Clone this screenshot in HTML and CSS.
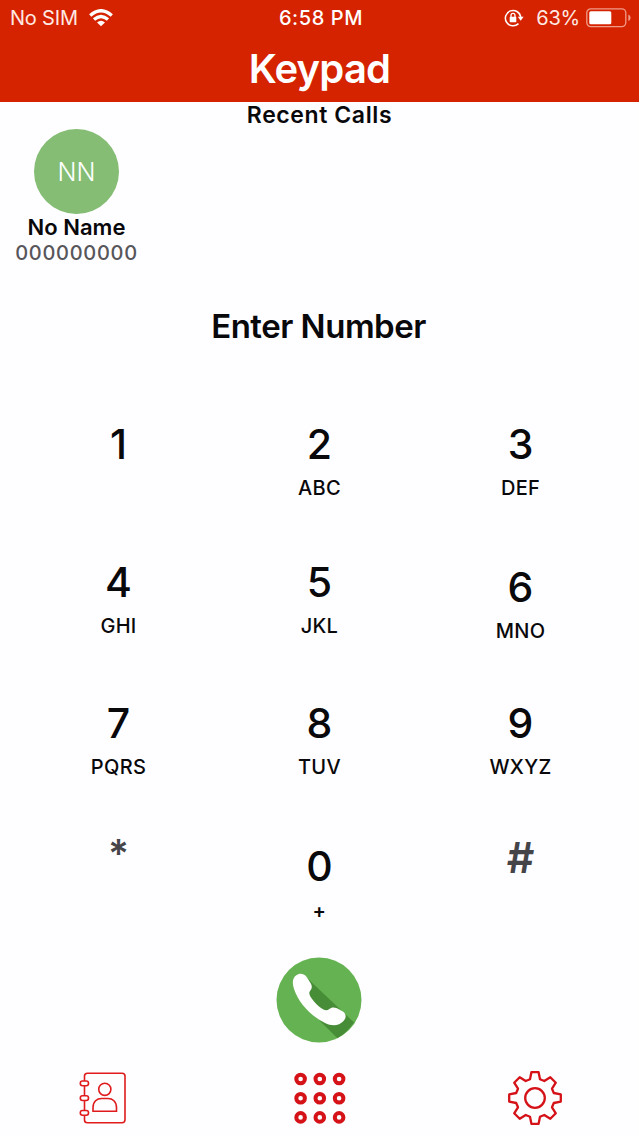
FILE: index.html
```
<!DOCTYPE html>
<html lang="en">
<head>
<meta charset="utf-8">
<title>Keypad</title>
<link rel="stylesheet" href="styles.css">
</head>
<body>
<div class="screen">
  <header class="header">
    <div class="status">
      <div class="status-left">
        <span class="carrier">No SIM</span>
        <svg class="wifi" width="24" height="18" viewBox="0 0 24 18" fill="none" stroke="#fff" stroke-width="3.3">
          <path d="M1.2 6.4Q12-3 22.8 6.4"/><path d="M5 10.6Q12 4.4 19 10.6"/><path d="M12 17.3L8 13.5Q12 10 16 13.5Z" fill="#fff" stroke="none"/>
        </svg>
      </div>
      <span class="time">6:58 PM</span>
      <div class="status-right">
        <svg class="lock" width="20" height="18" viewBox="0 0 20 18" fill="none" stroke="#fff" stroke-width="1.5">
          <path d="M14.5 14.6A7.7 7.7 0 1 1 16.7 8"/><path d="M13.8 7.7H19.6L16.7 11.8Z" fill="#fff" stroke="none"/><rect x="5.7" y="7.8" width="6.6" height="5.4" rx=".6" fill="#fff" stroke="none"/><path d="M7 8V6.4A2 2 0 0 1 11 6.4V8" stroke-width="1.3"/>
        </svg>
        <span class="percent">63%</span>
        <svg class="battery" width="46" height="20" viewBox="0 0 46 20">
          <rect x=".8" y=".8" width="39" height="17.8" rx="4" fill="none" stroke="#f09a88" stroke-width="1.3"/><rect x="3.3" y="3.2" width="22" height="13" rx="1.5" fill="#fff"/><path d="M42.3 6.5Q44.6 7.3 44.6 9.7T42.3 13Z" fill="#f09a88"/>
        </svg>
      </div>
    </div>
    <h1 class="title">Keypad</h1>
  </header>

  <section class="recent">
    <h2 class="recent-title">Recent Calls</h2>
    <div class="contact">
      <div class="avatar"><span class="initials">NN</span></div>
      <div class="name">No Name</div>
      <div class="number">000000000</div>
    </div>
  </section>

  <div class="prompt"><span class="prompt-text">Enter Number</span></div>

  <main class="keys">
    <div class="key"><span class="digit">1</span></div>
    <div class="key"><span class="digit">2</span><span class="letters">ABC</span></div>
    <div class="key"><span class="digit">3</span><span class="letters">DEF</span></div>
    <div class="key"><span class="digit">4</span><span class="letters">GHI</span></div>
    <div class="key"><span class="digit">5</span><span class="letters">JKL</span></div>
    <div class="key key-low"><span class="digit">6</span><span class="letters">MNO</span></div>
    <div class="key"><span class="digit">7</span><span class="letters">PQRS</span></div>
    <div class="key"><span class="digit">8</span><span class="letters">TUV</span></div>
    <div class="key"><span class="digit">9</span><span class="letters">WXYZ</span></div>
    <div class="key"><span class="digit star">*</span></div>
    <div class="key"><span class="digit">0</span><span class="letters plus">+</span></div>
    <div class="key"><span class="digit hash">#</span></div>
  </main>

  <div class="call">
    <svg width="86" height="86" viewBox="0 0 86 86">
      <circle cx="43" cy="43" r="42.5" fill="#65b252"/>
      <path d="M30 20L78 65.5Q70.5 76 61.5 81.2L44 64L30 42Z" fill="#478c36"/>
      <path d="M20 18.5C24 15.5 28.5 16.8 31 20.5L34.5 26C36.5 29.5 36 31.5 34 34C32.7 35.7 33.3 38 35 40.5C38.5 45.5 43 50 47 52.3C49.5 53.8 51.5 53.5 53 52.3C55.5 50 58 50 61 51.3L66.5 54.3C70.5 56.8 70.5 61 67.5 64C63 69 56 69.5 49 66C34 58.5 22.5 45.5 18 32C16 26 16.5 21 20 18.5Z" fill="#fff"/>
    </svg>
  </div>

  <nav class="tabs">
    <svg class="tab" width="56" height="56" viewBox="0 0 56 56" fill="none" stroke="#df1b1c" stroke-width="1.6">
      <path d="M8.5 11V6Q8.5 3.2 11.5 3.2H46Q49 3.2 49 6V49.5Q49 52.8 46 52.8H11.5Q8.5 52.8 8.5 50V45.3M8.5 15.8V25.7M8.5 30.5V40.5"/>
      <rect x="4.3" y="11" width="8.2" height="4.8" rx="2.2"/><rect x="4.3" y="25.7" width="8.2" height="4.8" rx="2.2"/><rect x="4.3" y="40.5" width="8.2" height="4.8" rx="2.2"/>
      <circle cx="28.8" cy="19.3" r="6.1"/><path d="M17 41.3V37.5C17 31.5 21 28.5 25.5 28.5H32C36.5 28.5 40.5 31.5 40.5 37.5V41.3Z"/>
    </svg>
    <svg class="tab" width="56" height="56" viewBox="0 0 56 56" fill="none" stroke="#d41217" stroke-width="4">
      <circle cx="8.6" cy="9" r="4.3"/><circle cx="27.8" cy="9" r="4.3"/><circle cx="47.1" cy="9" r="4.3"/>
      <circle cx="8.6" cy="28.2" r="4.3"/><circle cx="27.8" cy="28.2" r="4.3"/><circle cx="47.1" cy="28.2" r="4.3"/>
      <circle cx="8.6" cy="47.4" r="4.3"/><circle cx="27.8" cy="47.4" r="4.3"/><circle cx="47.1" cy="47.4" r="4.3"/>
    </svg>
    <svg class="tab" width="56" height="56" viewBox="0 0 56 56" fill="none" stroke="#d41217" stroke-width="2.3" stroke-linejoin="round">
      <path d="M24.4 2.2H31.6L33 9.2L37.3 11L43.3 7.2L48.8 12.7L45 18.7L46.8 23L53.8 24.4V31.6L46.8 33L45 37.3L48.8 43.3L43.3 48.8L37.3 45L33 46.8L31.6 53.8H24.4L23 46.8L18.7 45L12.7 48.8L7.2 43.3L11 37.3L9.2 33L2.2 31.6V24.4L9.2 23L11 18.7L7.2 12.7L12.7 7.2L18.7 11L23 9.2Z"/>
      <circle cx="28" cy="28" r="9.8"/>
    </svg>
  </nav>
</div>
</body>
</html>
```
FILE: styles.css
```
* { box-sizing: border-box; }
body { margin: 0; background: #fefdff; }
.screen {
  width: 639px; height: 1136px; overflow: hidden;
  display: flex; flex-direction: column;
  font-family: Inter, "Liberation Sans", sans-serif;
  color: #09080b; background: #fefdff;
}
.header { height: 102px; flex: none; background: #d52300; color: #fff; }
.status {
  height: 35px; display: grid; grid-template-columns: 1fr auto 1fr; align-items: center;
  padding: 1px 7px 0 10px; font-size: 20px; line-height: 34px;
}
.status-left { display: flex; align-items: center; gap: 11px; color: #ffe9e3; }
.carrier { letter-spacing: -.2px; }
.wifi { display: block; }
.time { font-weight: 500; letter-spacing: .6px; }
.status-right { display: flex; align-items: center; justify-content: flex-end; color: #ffe9e3; }
.lock { margin-right: 12px; }
.percent { margin-right: 6px; letter-spacing: -.2px; }
.title { margin: 0; font-size: 40px; font-weight: 600; line-height: 67px; text-align: center; letter-spacing: -.8px; }
.recent { height: 166px; flex: none; }
.recent-title { margin: 0; font-size: 23px; font-weight: 600; line-height: 27px; text-align: center; letter-spacing: .6px; }
.contact { width: 121px; margin-left: 16px; display: flex; flex-direction: column; align-items: center; }
.avatar {
  width: 85px; height: 85px; border-radius: 50%; background: #84bd73; color: #fff;
  display: flex; align-items: center; justify-content: center; font-size: 25px; font-weight: 300;
}
.name { font-size: 22px; font-weight: 600; line-height: 26px; white-space: nowrap; }
.number { font-size: 20px; font-weight: 500; line-height: 26px; color: #57565a; white-space: nowrap; letter-spacing: .7px; }
.prompt { height: 154px; flex: none; text-align: center; font-size: 33px; font-weight: 600; line-height: 116px; letter-spacing: -.5px; padding-right: 2px; }
.keys {
  flex: none; width: 603px; margin: 0 auto;
  display: grid; grid-template-columns: repeat(3, 1fr); grid-template-rows: 138px 141px 143px 110px;
}
.key { display: flex; flex-direction: column; align-items: center; }
.key-low { padding-top: 5px; }
.digit { font-size: 41px; font-weight: 500; line-height: 44px; }
.letters { font-size: 20px; font-weight: 500; line-height: 44px; letter-spacing: .3px; }
.star, .hash { color: #454449; font-weight: 600; }
.star { font-size: 39px; margin-top: -12px; }
.hash { font-size: 43px; margin-top: -9px; }
.plus { line-height: 46px; font-weight: 600; }
.call { flex: none; height: 93px; display: flex; justify-content: center; padding: 3px 1px 0 0; }
.tabs { display: flex; justify-content: space-between; padding: 23px 76px 0; }
.tab { display: block; }
```
